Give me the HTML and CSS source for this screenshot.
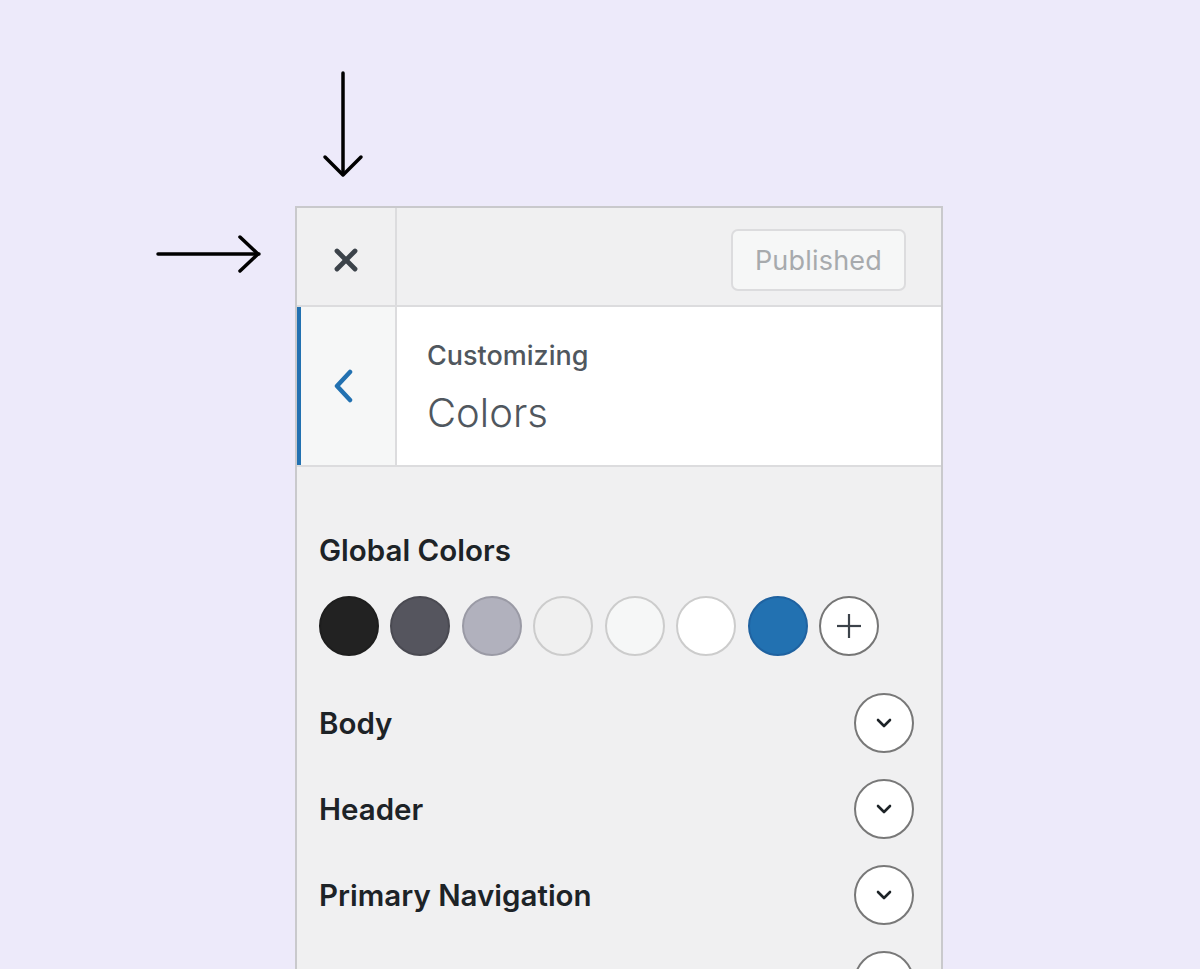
FILE: index.html
```html
<!DOCTYPE html>
<html lang="en">
<head>
<meta charset="utf-8">
<title>Customizing Colors</title>
<link rel="stylesheet" href="styles.css">
</head>
<body>
<svg class="arrow arrow-down" width="48" height="112" viewBox="0 0 48 112" aria-hidden="true">
  <line x1="24" y1="2" x2="24" y2="103" />
  <polyline points="6,86 24,104 42,86" />
</svg>
<svg class="arrow arrow-right" width="112" height="44" viewBox="0 0 112 44" aria-hidden="true">
  <line x1="2" y1="20" x2="103" y2="20" />
  <polyline points="84,3 102,20 84,37" />
</svg>

<div class="panel">
  <div class="topbar">
    <div class="close">
      <svg width="24" height="24" viewBox="0 0 24 24" aria-hidden="true">
        <line x1="3" y1="3" x2="21" y2="21" />
        <line x1="21" y1="3" x2="3" y2="21" />
      </svg>
    </div>
    <div class="topbar-main">
      <div class="publish">Published</div>
    </div>
  </div>

  <div class="titlebar">
    <div class="back">
      <svg width="22" height="34" viewBox="0 0 22 34" aria-hidden="true">
        <polyline points="17,3 4,17 17,31" />
      </svg>
    </div>
    <div class="titles">
      <div class="sub">Customizing</div>
      <div class="title">Colors</div>
    </div>
  </div>

  <div class="content">
    <div class="section-label">Global Colors</div>
    <div class="swatches">
      <span class="swatch c1"></span>
      <span class="swatch c2"></span>
      <span class="swatch c3"></span>
      <span class="swatch c4"></span>
      <span class="swatch c5"></span>
      <span class="swatch c6"></span>
      <span class="swatch c7"></span>
      <span class="swatch add">
        <svg width="26" height="26" viewBox="0 0 26 26" aria-hidden="true">
          <line x1="13" y1="1" x2="13" y2="25" />
          <line x1="1" y1="13" x2="25" y2="13" />
        </svg>
      </span>
    </div>

    <div class="row">
      <span class="row-label">Body</span>
      <span class="toggle"><svg width="16" height="10" viewBox="0 0 16 10" aria-hidden="true"><polyline points="2,2 8,8 14,2" /></svg></span>
    </div>
    <div class="row">
      <span class="row-label">Header</span>
      <span class="toggle"><svg width="16" height="10" viewBox="0 0 16 10" aria-hidden="true"><polyline points="2,2 8,8 14,2" /></svg></span>
    </div>
    <div class="row">
      <span class="row-label">Primary Navigation</span>
      <span class="toggle"><svg width="16" height="10" viewBox="0 0 16 10" aria-hidden="true"><polyline points="2,2 8,8 14,2" /></svg></span>
    </div>
    <div class="row">
      <span class="row-label"></span>
      <span class="toggle"><svg width="16" height="10" viewBox="0 0 16 10" aria-hidden="true"><polyline points="2,2 8,8 14,2" /></svg></span>
    </div>
  </div>
</div>
</body>
</html>
```

FILE: styles.css
```css
html, body {
  margin: 0;
  padding: 0;
  height: 100%;
  overflow: hidden;
}

body {
  background: #edeafa;
  font-family: Inter, "Noto Sans", "Liberation Sans", sans-serif;
  color: #1d2327;
  position: relative;
}

.arrow {
  position: absolute;
  fill: none;
  stroke: #000;
  stroke-width: 3.5;
  stroke-linecap: round;
  stroke-linejoin: round;
}

.arrow-down {
  left: 319px;
  top: 71px;
}

.arrow-right {
  left: 156px;
  top: 234px;
}

.panel {
  margin: 206px 0 0 295px;
  width: 644px;
  height: 761px;
  border: 2px solid #c9c9cc;
  border-bottom: none;
  background: #f0f0f1;
  display: flex;
  flex-direction: column;
  overflow: hidden;
}

.topbar {
  height: 97px;
  flex: none;
  display: flex;
  background: #f0f0f1;
  border-bottom: 2px solid #dcdcde;
}

.close {
  width: 100px;
  border-right: 2px solid #dcdcde;
  display: flex;
  align-items: center;
  justify-content: center;
  padding-top: 6px;
  box-sizing: border-box;
}

.close svg {
  fill: none;
  stroke: #3c434a;
  stroke-width: 4.8;
  stroke-linecap: round;
}

.topbar-main {
  flex: 1;
  display: flex;
  justify-content: flex-end;
  align-items: flex-start;
  padding: 21px 35px 0 0;
}

.publish {
  height: 58px;
  padding: 0 22px;
  display: flex;
  align-items: center;
  border: 2px solid #dcdcde;
  border-radius: 7px;
  background: #f6f7f7;
  color: #a7aaad;
  font-size: 27px;
  letter-spacing: 0.2px;
}

.titlebar {
  height: 158px;
  flex: none;
  display: flex;
  background: #fff;
  border-bottom: 2px solid #dcdcde;
}

.back {
  width: 100px;
  border-left: 4px solid #2271b1;
  border-right: 2px solid #dcdcde;
  background: #f6f7f7;
  display: flex;
  align-items: center;
  justify-content: flex-start;
  padding-left: 32px;
  box-sizing: border-box;
}

.back svg {
  fill: none;
  stroke: #2271b1;
  stroke-width: 4.5;
  stroke-linecap: round;
  stroke-linejoin: round;
}

.titles {
  padding: 33px 0 0 30px;
}

.sub {
  font-size: 27px;
  line-height: 32px;
  color: #50575e;
  font-weight: 500;
}

.title {
  margin-top: 16px;
  font-size: 40px;
  line-height: 50px;
  font-weight: 300;
  color: #50575e;
}

.content {
  padding: 65px 27px 0 22px;
}

.section-label {
  font-size: 29.5px;
  line-height: 36px;
  font-weight: 600;
  color: #1d2327;
}

.swatches {
  display: flex;
  gap: 11.45px;
  margin-top: 28px;
  margin-bottom: 24px;
}

.swatch {
  width: 60px;
  height: 60px;
  flex: none;
  border-radius: 50%;
  box-sizing: border-box;
  border: 2px solid #ccc;
  display: flex;
  align-items: center;
  justify-content: center;
}

.c1 { background: #222222; border-color: #1e1e1e; }
.c2 { background: #55555e; border-color: #4a4a52; }
.c3 { background: #b1b1bd; border-color: #9a9aa5; }
.c4 { background: #f0f0f0; border-color: #cccccc; }
.c5 { background: #f6f7f7; border-color: #cccccc; }
.c6 { background: #ffffff; border-color: #cccccc; }
.c7 { background: #2271b1; border-color: #1f62a0; }

.add {
  background: #fff;
  border-color: #767676;
}

.add svg {
  stroke: #3c434a;
  stroke-width: 2.2;
}

.row {
  height: 86px;
  display: flex;
  align-items: center;
  justify-content: space-between;
}

.row-label {
  font-size: 29.5px;
  font-weight: 600;
  color: #1d2327;
}

.toggle {
  width: 60px;
  height: 60px;
  box-sizing: border-box;
  border-radius: 50%;
  border: 2px solid #787878;
  background: #fff;
  display: flex;
  align-items: center;
  justify-content: center;
}

.toggle svg {
  fill: none;
  stroke: #1d2327;
  stroke-width: 2.6;
  stroke-linecap: round;
  stroke-linejoin: round;
}
```
